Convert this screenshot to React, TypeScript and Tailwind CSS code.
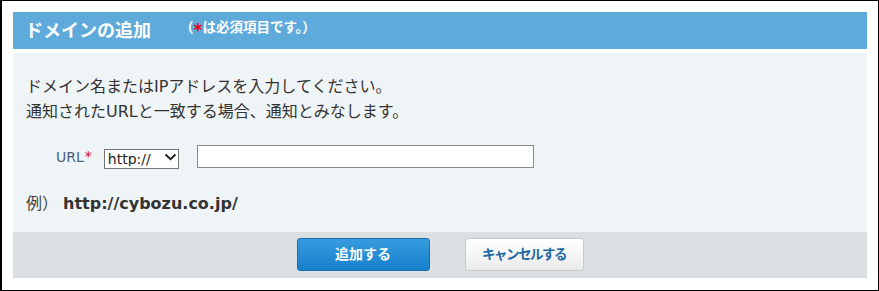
import React from "react";

const fontStack = "font-['DejaVu_Sans','Noto_Sans_CJK_JP',sans-serif]";

const Chevron: React.FC = () => (
  <svg width="13" height="8" viewBox="0 0 13 8" className="pointer-events-none absolute right-[2px] top-[6px]">
    <polyline points="1.5,1.5 6.5,6.2 11.5,1.5" fill="none" stroke="#222" strokeWidth="2" />
  </svg>
);

export default function App() {
  return (
    <div className={`${fontStack} w-[879px] h-[291px] bg-white border-black border-t border-r border-b border-l-2 pt-[11px] pl-[11px] pr-[11px] pb-[12px]`}>
      {/* title bar */}
      <div className="h-[37px] bg-[#5eaadb] flex items-center pl-[12px]">
        <h1 className="text-[18px] font-bold text-white leading-none">ドメインの追加</h1>
        <span className="ml-[29px] mb-[6px] text-[13.5px] font-bold text-white leading-none flex items-center">
          （<span className="text-[#e60012] text-[17px] mt-[5px]">*</span>は必須項目です。）
        </span>
      </div>

      {/* form body */}
      <div className="mt-[4px] h-[179px] bg-[#eff4f7] pt-[21px] pl-[13px]">
        <p className="text-[16px] leading-[25px] text-[#333]">
          ドメイン名またはIPアドレスを入力してください。
          <br />
          通知されたURLと一致する場合、通知とみなします。
        </p>

        <div className="mt-[21px] ml-[30px] h-[23px] flex items-center">
          <label className="text-[14px] text-[#4a5f78] leading-none flex items-start">
            URL<span className="text-[#e60012] text-[14px] -mt-[1px] ml-[1px]">*</span>
          </label>
          <div className="relative ml-[12px] w-[75px] h-[20px]">
            <select className="appearance-none w-full h-full border border-[#767676] bg-white text-[14px] text-[#222] pl-[3px] leading-none outline-none">
              <option>http://</option>
              <option>https://</option>
            </select>
            <Chevron />
          </div>
          <input type="text" className="ml-[18px] w-[337px] h-[23px] border border-[#8a8a8a] bg-white outline-none" />
        </div>

        <div className="mt-[23px] flex items-center leading-[25px]">
          <span className="text-[16px] text-[#444]">例）</span>
          <span className="ml-[5px] text-[16px] font-bold text-[#333]">http://cybozu.co.jp/</span>
        </div>
      </div>

      {/* footer buttons */}
      <div className="h-[46px] bg-[#dbe0e3] flex justify-center items-start pt-[6px] gap-[35px]">
        <button className="w-[133px] h-[33px] rounded-[3px] border border-[#1b6fae] bg-gradient-to-b from-[#369cdf] to-[#1580cb] text-white font-bold text-[14px]">
          追加する
        </button>
        <button className="w-[119px] h-[33px] rounded-[3px] border border-[#c6cacd] bg-gradient-to-b from-white to-[#ebebeb] text-[#1d69a3] font-bold text-[13.5px] tracking-[-1.5px]">
          キャンセルする
        </button>
      </div>
    </div>
  );
}
